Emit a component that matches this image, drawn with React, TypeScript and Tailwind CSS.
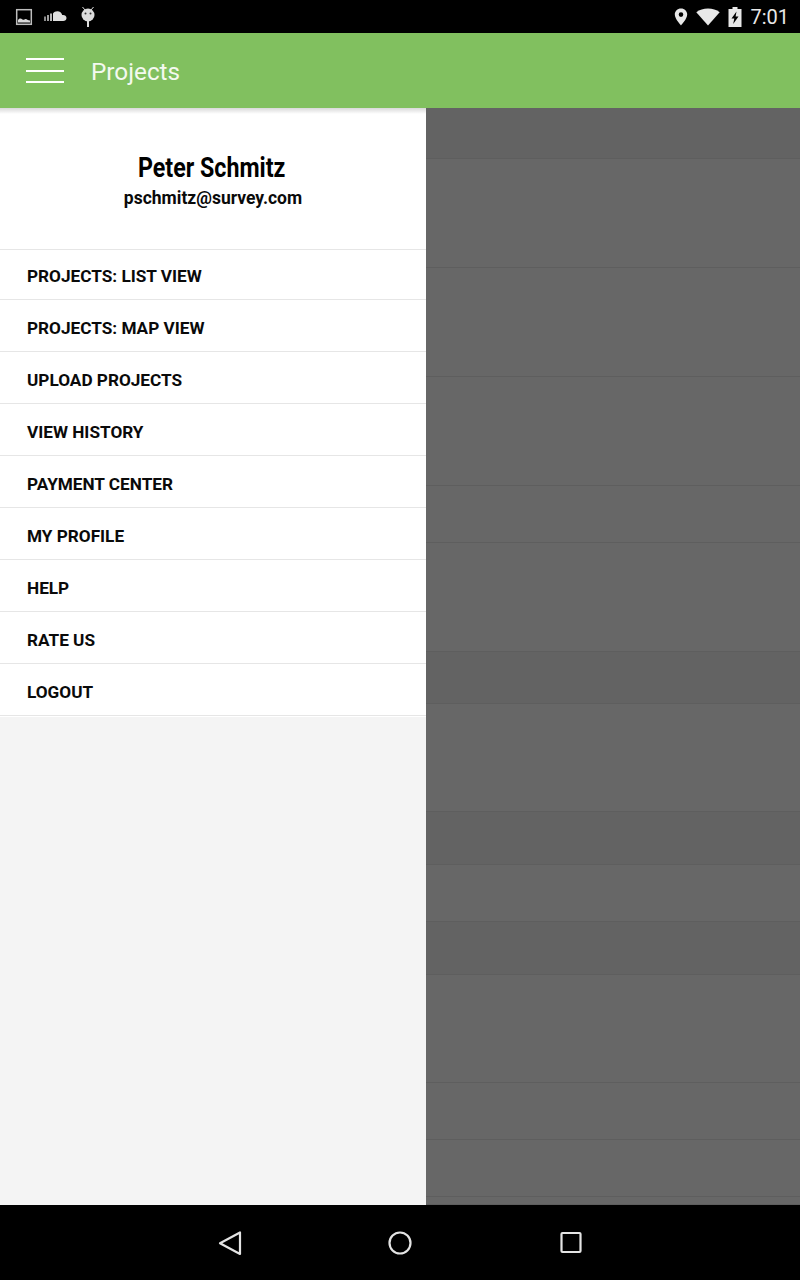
const menu = ['PROJECTS: LIST VIEW', 'PROJECTS: MAP VIEW', 'UPLOAD PROJECTS', 'VIEW HISTORY', 'PAYMENT CENTER', 'MY PROFILE', 'HELP', 'RATE US', 'LOGOUT'];

// background list under the scrim: [height, dark band]
const rows: [number, boolean][] = [
  [51, true], [109, false], [109, false], [109, false], [57, false], [109, false], [52, true], [108, false],
  [53, true], [57, false], [53, true], [108, false], [57, false], [57, false], [8, false],
];

function StatusIcons() {
  return (
    <div className="flex items-center">
      <svg width="18" height="18" viewBox="0 0 18 18" className="ml-[15px]" fill="none">
        <rect x="1.7" y="1.700" width="14.600" height="14.600" stroke="#bdbdbd" strokeWidth="1.500" />
        <path d="M3 14.500v-2.500c2-2.500 3-1.500 4.500-.5s2-1 3.500-.5 2 1.500 4 1.500v2z" fill="#d8d8d8" />
      </svg>
      <svg width="24" height="12" viewBox="0 0 24 12" className="ml-[11px]">
        <rect x="0" y="5.500" width="2" height="4.500" fill="#8c8c8c" />
        <rect x="3" y="4" width="2" height="6" fill="#a0a0a0" />
        <rect x="6" y="2.500" width="2" height="7.500" fill="#b8b8b8" />
        <path d="M9 10V2.500C10 1 11.500.2 13.300.2c2.500 0 4.400 1.600 4.900 3.800 2.200-.5 4.300.9 4.300 3 0 1.800-1.500 3-3.300 3z" fill="#e0e0e0" />
      </svg>
      <svg width="18" height="22" viewBox="0 0 18 22" className="ml-[11px]" fill="#dcdcdc">
        <path d="M3.500 1l2.500 3M14.500 1l-2.500 3" stroke="#dcdcdc" strokeWidth="1" />
        <circle cx="9" cy="9" r="6.500" />
        <circle cx="6.500" cy="7.500" r="1" fill="#333" />
        <circle cx="11.500" cy="7.500" r="1" fill="#333" />
        <rect x="8" y="15" width="2" height="6" />
      </svg>
    </div>
  );
}

function SystemIcons() {
  return (
    <div className="flex items-center">
      <svg width="14" height="18" viewBox="0 0 14 18" fill="#e8e8e8">
        <path fillRule="evenodd" d="M7 .5C3.400.5.8 3.200.8 6.600.8 11 7 17.500 7 17.500s6.200-6.500 6.200-10.900C13.200 3.200 10.600.5 7 .5zM7 4.300a2.300 2.300 0 110 4.600 2.300 2.300 0 010-4.600z" />
      </svg>
      <svg width="24" height="18" viewBox="0 0 24 18" fill="#e8e8e8" className="ml-[8px]">
        <path d="M12 17.500L.3 4.200C3.500 1.800 7.500.5 12 .5s8.500 1.300 11.700 3.700z" />
      </svg>
      <svg width="14" height="20" viewBox="0 0 14 20" className="ml-[8px]">
        <path fillRule="evenodd" fill="#e8e8e8" d="M4.500 0h5v2H13.500v18H.5V2h4zM8.500 4.500L3.500 11.500H6.300L5.200 17 10.500 9.500H7.600z" />
      </svg>
      <span className="ml-[8px] text-[20px] leading-none text-[#e8e8e8]">7:01</span>
    </div>
  );
}

export default function App() {
  return (
    <div className="flex h-[1280px] w-[800px] flex-col overflow-hidden bg-black font-['Roboto',sans-serif]">
      <div className="flex h-[33px] shrink-0 items-center justify-between pr-[11px]">
        <StatusIcons />
        <SystemIcons />
      </div>
      <div className="z-10 flex h-[75px] shrink-0 items-center bg-[#81c05f] pl-[26px]">
        <div className="flex w-[38px] flex-col gap-[9.5px]">
          <div className="h-[2px] bg-white" />
          <div className="h-[2px] bg-white" />
          <div className="h-[2px] bg-white" />
        </div>
        <span className="mt-[3px] ml-[27px] text-[24.300px] leading-none text-[#f4f9f0]">Projects</span>
      </div>
      <div className="flex min-h-0 flex-1">
        <div className="relative z-[5] flex w-[426px] shrink-0 flex-col bg-[#f4f4f4]">
          <div className="pointer-events-none absolute inset-x-0 top-0 h-[6px] bg-gradient-to-b from-black/15 to-transparent" />
          <div className="flex h-[141px] flex-col items-center bg-white pt-[45px]">
            <div className="mr-[2px] origin-center scale-x-[0.86] text-[27px] leading-[30px] font-bold whitespace-nowrap text-black">Peter Schmitz</div>
            <div className="mt-[5px] text-[17.500px] leading-[20px] font-bold text-[#0a0a0a]">pschmitz@survey.com</div>
          </div>
          <div className="bg-white">
            {menu.map((item, i) => (
              <div key={item} className={`flex items-center border-t border-[#e6e6e6] pl-[27px] text-[17.200px] font-bold text-[#0a0a0a] ${i === 0 ? 'h-[50px] pt-[5px]' : 'h-[52px] pt-[7px]'}`}>
                {item}
              </div>
            ))}
          </div>
          <div className="h-[2px] border-t border-[#e6e6e6] bg-white" />
        </div>
        <div className="flex min-w-0 flex-1 flex-col bg-[#676767]">
          {rows.map(([h, dark], i) => (
            <div key={i} className={`shrink-0 border-b border-[#5e5e5e] ${dark ? 'bg-[#636363]' : 'bg-[#676767]'}`} style={{ height: h }} />
          ))}
        </div>
      </div>
      <div className="flex h-[75px] shrink-0 items-center justify-center bg-black">
        <svg width="26" height="26" viewBox="0 0 26 26" fill="none" stroke="#e4e4e4" strokeWidth="2.200" strokeLinejoin="round" className="mr-[144px]">
          <path d="M23 2.500V24L3 13.200z" />
        </svg>
        <svg width="26" height="26" viewBox="0 0 26 26" fill="none" stroke="#e4e4e4" strokeWidth="2.200">
          <circle cx="13" cy="13" r="10.500" />
        </svg>
        <svg width="24" height="24" viewBox="0 0 24 24" fill="none" stroke="#e4e4e4" strokeWidth="2.200" strokeLinejoin="round" className="ml-[146px]">
          <rect x="2.500" y="2" width="19" height="19" rx="1" />
        </svg>
      </div>
    </div>
  );
}
